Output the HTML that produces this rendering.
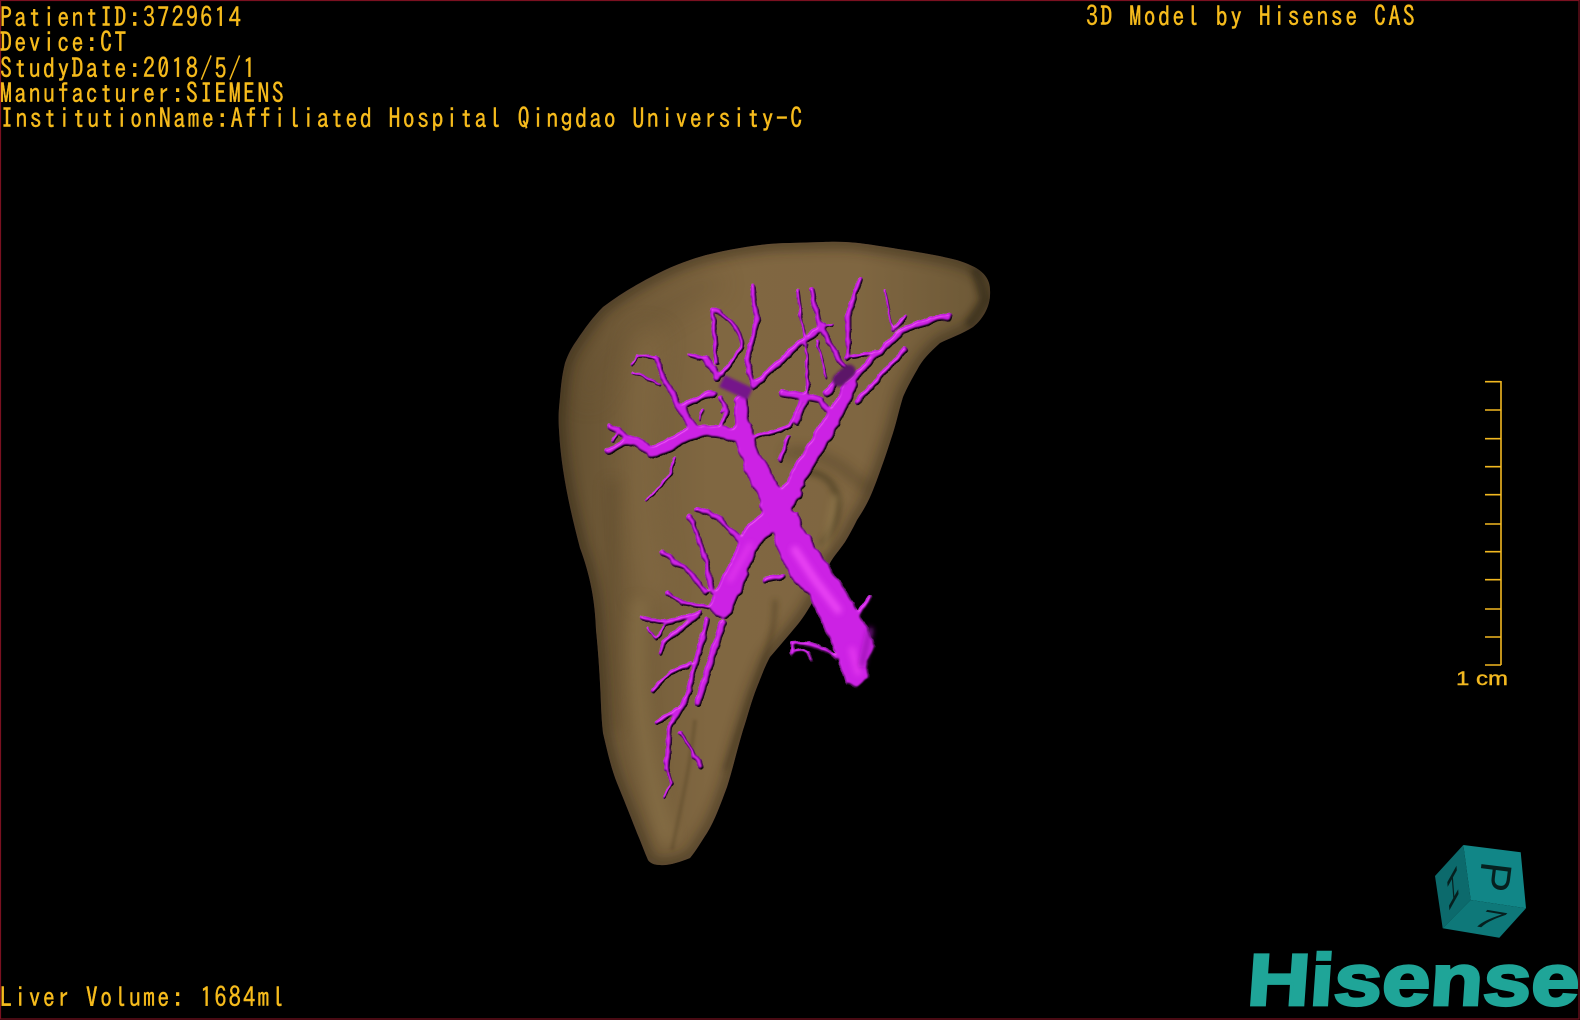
<!DOCTYPE html>
<html>
<head>
<meta charset="utf-8">
<style>
html,body{margin:0;padding:0;background:#000;}
#p{position:relative;width:1580px;height:1020px;background:#000;overflow:hidden;}
.t{position:absolute;left:0;font-family:"IPAGothic","Liberation Mono",monospace;font-size:24px;letter-spacing:2.3px;line-height:28px;color:#f6bb1c;white-space:pre;transform:scale(1,1.14);transform-origin:0 22.5px;-webkit-text-stroke:.35px #f6bb1c;}
svg{position:absolute;left:0;top:0;}
.v path{fill:none;stroke:#cb20e4;stroke-linecap:round;stroke-linejoin:round;}
</style>
</head>
<body>
<div id="p">
<svg width="1580" height="1020" viewBox="0 0 1580 1020" xmlns="http://www.w3.org/2000/svg">
<defs>
<linearGradient id="lg" gradientUnits="userSpaceOnUse" x1="556" y1="0" x2="990" y2="0">
<stop offset="0" stop-color="#604d2e"/><stop offset=".12" stop-color="#705a38"/><stop offset=".35" stop-color="#806741"/><stop offset=".7" stop-color="#7f6641"/><stop offset="1" stop-color="#6c5836"/>
</linearGradient>
<clipPath id="lc"><path d="M823 242C845 241 860 243 873 245C892 248 905 250 923 253C945 257 960 260 970 265C982 270 990 278 990 290C991 305 984 318 973 327C962 334 950 338 940 343C930 352 922 360 917 370C910 382 906 390 903 397C899 410 897 420 893 433C889 445 887 452 883 463C879 474 877 480 873 490C867 505 862 512 857 520C852 530 848 537 845 542C838 552 834 556 830 563C823 578 820 590 812 603C805 615 800 622 793 630C783 642 776 650 770 657C764 668 762 675 757 687C751 702 748 715 743 730C737 750 733 768 727 787C721 803 715 820 707 833C701 842 696 851 690 858C680 862 668 866 660 865C654 865 650 863 648 860C644 851 641 842 637 833C630 815 624 800 617 783C611 768 607 750 603 733C601 715 601 700 600 683C599 665 598 650 596 630C595 600 590 575 580 548C570 510 561 470 559 430C558 415 559 408 560 397C561 385 562 375 565 363C568 354 572 347 577 340C585 328 593 317 603 307C615 298 627 290 640 283C656 274 672 266 690 260C707 254 723 251 740 248C757 245 773 243 790 243Z"/></clipPath>
<filter id="b3" filterUnits="userSpaceOnUse" x="500" y="200" width="560" height="720"><feGaussianBlur stdDeviation="3"/></filter>
<filter id="b6" filterUnits="userSpaceOnUse" x="500" y="200" width="560" height="720"><feGaussianBlur stdDeviation="6"/></filter>
<filter id="b12" filterUnits="userSpaceOnUse" x="500" y="200" width="560" height="720"><feGaussianBlur stdDeviation="12"/></filter>
<filter id="b1" filterUnits="userSpaceOnUse" x="500" y="200" width="560" height="720"><feGaussianBlur stdDeviation="1.2"/></filter>
<filter id="tube" filterUnits="userSpaceOnUse" x="560" y="250" width="420" height="580" color-interpolation-filters="sRGB">
<feTurbulence type="fractalNoise" baseFrequency="0.09" numOctaves="2" seed="7" result="n"/>
<feDisplacementMap in="SourceGraphic" in2="n" scale="5" xChannelSelector="R" yChannelSelector="G" result="d"/>
<feGaussianBlur in="d" stdDeviation="1.4" result="h"/>
<feDiffuseLighting in="h" surfaceScale="3" diffuseConstant="1.16" lighting-color="#ffffff" result="df"><feDistantLight azimuth="235" elevation="60"/></feDiffuseLighting>
<feBlend in="d" in2="df" mode="multiply" result="m"/>
<feComposite in="m" in2="d" operator="in" result="mc"/>
<feSpecularLighting in="h" surfaceScale="3" specularConstant=".7" specularExponent="25" lighting-color="#ff70ff" result="s"><feDistantLight azimuth="235" elevation="35"/></feSpecularLighting>
<feComposite in="s" in2="d" operator="in" result="sc"/>
<feMerge><feMergeNode in="mc"/><feMergeNode in="sc"/></feMerge>
</filter>
</defs>

<!-- liver -->
<g clip-path="url(#lc)">
<rect x="540" y="230" width="470" height="650" fill="url(#lg)"/>
<path d="M585 400C600 350 660 300 720 280" stroke="#6a5534" stroke-width="22" fill="none" opacity=".45" filter="url(#b12)"/>
<path d="M650 330C630 420 640 530 655 600" stroke="#8a7046" stroke-width="30" fill="none" opacity=".45" filter="url(#b12)"/>
<path d="M612 480C612 560 610 640 614 730" stroke="#5f4c2e" stroke-width="14" fill="none" opacity=".45" filter="url(#b6)"/>
<path d="M640 600C632 680 645 770 668 840" stroke="#8b734a" stroke-width="18" fill="none" opacity=".55" filter="url(#b6)"/>
<path d="M695 720C690 770 680 810 672 850" stroke="#5c4a2c" stroke-width="4" fill="none" opacity=".4" filter="url(#b1)"/>
<path d="M775 600C776 630 765 660 750 700L725 770" stroke="#4d3e24" stroke-width="4" fill="none" opacity=".6" filter="url(#b3)"/>
<path d="M805 472C830 470 855 500 822 545" stroke="#4a3c24" stroke-width="7" fill="none" opacity=".6" filter="url(#b3)"/>
<path d="M785 455C800 448 825 455 845 470L870 490" stroke="#3e321e" stroke-width="9" fill="none" opacity=".4" filter="url(#b6)"/>
<path d="M835 495L825 550" stroke="#927a4e" stroke-width="8" fill="none" opacity=".6" filter="url(#b3)"/>
<path d="M823 242C845 241 860 243 873 245C892 248 905 250 923 253C945 257 960 260 970 265C982 270 990 278 990 290C991 305 984 318 973 327C962 334 950 338 940 343C930 352 922 360 917 370C910 382 906 390 903 397C899 410 897 420 893 433C889 445 887 452 883 463C879 474 877 480 873 490C867 505 862 512 857 520C852 530 848 537 845 542C838 552 834 556 830 563C823 578 820 590 812 603C805 615 800 622 793 630C783 642 776 650 770 657C764 668 762 675 757 687C751 702 748 715 743 730C737 750 733 768 727 787C721 803 715 820 707 833C701 842 696 851 690 858C680 862 668 866 660 865C654 865 650 863 648 860C644 851 641 842 637 833C630 815 624 800 617 783C611 768 607 750 603 733C601 715 601 700 600 683C599 665 598 650 596 630C595 600 590 575 580 548C570 510 561 470 559 430C558 415 559 408 560 397C561 385 562 375 565 363C568 354 572 347 577 340C585 328 593 317 603 307C615 298 627 290 640 283C656 274 672 266 690 260C707 254 723 251 740 248C757 245 773 243 790 243Z" fill="none" stroke="#2a2213" stroke-width="14" opacity=".5" filter="url(#b6)"/>
<path d="M975 268L985 300L968 326" stroke="#2e2514" stroke-width="10" fill="none" opacity=".55" filter="url(#b3)"/>
</g>

<!-- vessels -->
<g class="v" filter="url(#tube)">
<path style="stroke-width:3.5" d="M675 457C672 470 668 480 660 488L647 500"/>
<path style="stroke-width:3.5" d="M807 345L808 390M798 290L805 345"/>
<path style="stroke-width:3" d="M667 770L671 783L665 797M793 653C798 650 805 650 808 652L812 660"/>
<path style="stroke-width:3" d="M660 385L645 377L633 372M885 290L889 310L893 330M657 358L637 355L632 365"/>
<path style="stroke-width:3" d="M657 638L667 623M648 628L655 640M612 442L620 430M722 412L725 405"/>
<path style="stroke-width:3" d="M817 340L827 377M700 420L702 410M833 325L823 327"/>
<path style="stroke-width:5" d="M788 437L780 460M720 397L727 412L720 427M707 360L690 355M713 313L717 363M712 310C722 312 728 316 733 325C740 335 745 343 740 352L723 373"/>
<path style="stroke-width:5" d="M750 439L770 433L790 427L800 403L807 393M807 400L797 423"/>
<path style="stroke-width:5" d="M690 665L670 673L652 692M677 710L657 723M680 733L690 747L701 767M793 644C805 643 812 644 820 647L837 657M792 653L793 644"/>
<path style="stroke-width:5" d="M667 623L642 618M663 643L661 652M708 607L683 603L667 593M893 330L905 318M877 352L853 357"/>
<path style="stroke-width:6" d="M812 290L818 320L827 340L845 367M848 357L848 317L860 280M753 288L757 323L747 360L753 387"/>
<path style="stroke-width:5.5" d="M857 403L880 377L905 350"/>
<path style="stroke-width:6" d="M703 550L713 593M690 517L703 550M662 552L690 573L707 593M700 613L667 623M697 617L663 643M765 580L783 577M860 613L870 598"/>
<path style="stroke-width:6" d="M687 697L670 727L667 770M707 620L697 660L687 697M698 510C710 512 718 517 723 522L743 543M657 358L663 377L680 407M723 373L717 377"/>
<path style="stroke-width:8" d="M723 623L710 663L698 703"/>
<path style="stroke-width:7" d="M753 387L800 343L823 327M680 407L713 393M610 427L637 442M608 452L625 442L637 442M847 385L877 355L903 330L930 320L948 317"/>
<path style="stroke-width:8" d="M783 393L820 400L833 417M827 393L840 377M717 377L707 360"/>
<path style="stroke-width:10" d="M637 442L653 452"/>
<path style="stroke-width:13" d="M653 452C665 450 680 436 697 432C715 430 725 432 740 437"/>
<path style="stroke-width:10" d="M693 427L680 407"/>
<path style="stroke-width:15" d="M741 402L743 430"/>
<path style="stroke-width:20" d="M743 430C746 445 750 455 755 465"/>
<path style="stroke-width:24" d="M755 465L773 500"/>
<path style="stroke-width:15" d="M850 387L833 420"/>
<path style="stroke-width:18" d="M833 420L810 457L790 493"/>
<path style="stroke-width:23" d="M790 493L773 517L752 537"/>
<path style="stroke-width:21" d="M752 537L737 573"/>
<path style="stroke-width:25" d="M737 573L722 606"/>
<path style="stroke-width:27" d="M773 505L790 530"/>
<path style="fill:#cb20e4;stroke-width:1" d="M775 543L790 577L810 597L825 630L838 657L847 685L857 688L869 680L867 663L875 647L867 627L850 597L827 563L805 530L798 513L770 515Z"/>
<path style="stroke-width:3" d="M866 630L873 650"/>
</g>

<!-- dark rings and lights -->
<path d="M722 381L750 394" stroke="#74168a" stroke-width="13" fill="none" stroke-linecap="butt" filter="url(#b1)"/>
<path d="M839 380L849 371" stroke="#5c1268" stroke-width="13" fill="none" stroke-linecap="round" filter="url(#b1)"/>
<path d="M795 550L815 580L838 610" stroke="#f04cf7" stroke-width="8" fill="none" stroke-linecap="round" filter="url(#b3)" opacity=".8"/>
<path d="M852 650L858 672" stroke="#ea3ef2" stroke-width="7" fill="none" stroke-linecap="round" filter="url(#b3)" opacity=".7"/>
<path d="M730 580L750 545" stroke="#ea3ef2" stroke-width="5" fill="none" stroke-linecap="round" filter="url(#b3)" opacity=".7"/>
<path d="M870 630L862 665" stroke="#9c14b4" stroke-width="5" fill="none" stroke-linecap="round" filter="url(#b3)"/>

<!-- ruler -->
<g stroke="#f2b820" stroke-width="1.6" fill="none">
<path d="M1501 381V665"/>
<path d="M1485 381.7H1501M1485 410H1501M1485 438.7H1501M1485 466.7H1501M1485 494.7H1501M1485 524H1501M1485 551.7H1501M1485 579.7H1501M1485 609H1501M1485 637H1501M1485 665H1501"/>
</g>
<text x="1456" y="685" font-family="'Liberation Sans',sans-serif" font-size="19" fill="#f2b820" stroke="#f2b820" stroke-width=".4" textLength="52" lengthAdjust="spacingAndGlyphs">1 cm</text>

<!-- cube -->
<polygon points="1463.3,845 1520.7,852.3 1526,908.3 1470.7,900" fill="#118687"/>
<polygon points="1463.3,845 1435,876 1442.7,928.3 1470.7,900" fill="#0c6a6c"/>
<polygon points="1470.7,900 1526,908.3 1499.3,937.7 1442.7,928.3" fill="#0e7879"/>
<text transform="translate(1496,877) rotate(97)" text-anchor="middle" y="16" font-family="'Liberation Sans',sans-serif" font-size="44" fill="#06201f">P</text>
<text transform="matrix(0.08 1.1 -0.29 0.52 1453 888)" text-anchor="middle" y="16" font-family="'Liberation Sans',sans-serif" font-size="46" fill="#06201f">H</text>
<text transform="matrix(1 .17 -.52 .52 1490 919)" text-anchor="middle" y="16" font-family="'Liberation Sans',sans-serif" font-size="44" fill="#06201f">7</text>

<!-- logo -->
<text transform="translate(1246 1005) skewX(-4)" x="0" y="0" font-family="'Liberation Sans',sans-serif" font-weight="bold" font-size="73" fill="#1fa598" stroke="#1fa598" stroke-width="2.8" textLength="332" lengthAdjust="spacingAndGlyphs">Hisense</text>

<!-- border -->
<rect x="0.5" y="0.5" width="1578.5" height="1018.5" fill="none" stroke="#7a1020" stroke-width="1.2"/>
</svg>

<div class="t" style="top:3.5px">PatientID:3729614</div>
<div class="t" style="top:28.5px">Device:CT</div>
<div class="t" style="top:54.5px">StudyDate:2018/5/1</div>
<div class="t" style="top:80px">Manufacturer:SIEMENS</div>
<div class="t" style="top:105px;left:1px;letter-spacing:2.35px">InstitutionName:Affiliated Hospital Qingdao University-C</div>
<div class="t" style="top:2.5px;left:1086px;letter-spacing:2.4px">3D Model by Hisense CAS</div>
<div class="t" style="top:983.5px">Liver Volume: 1684ml</div>
</div>
</body>
</html>
